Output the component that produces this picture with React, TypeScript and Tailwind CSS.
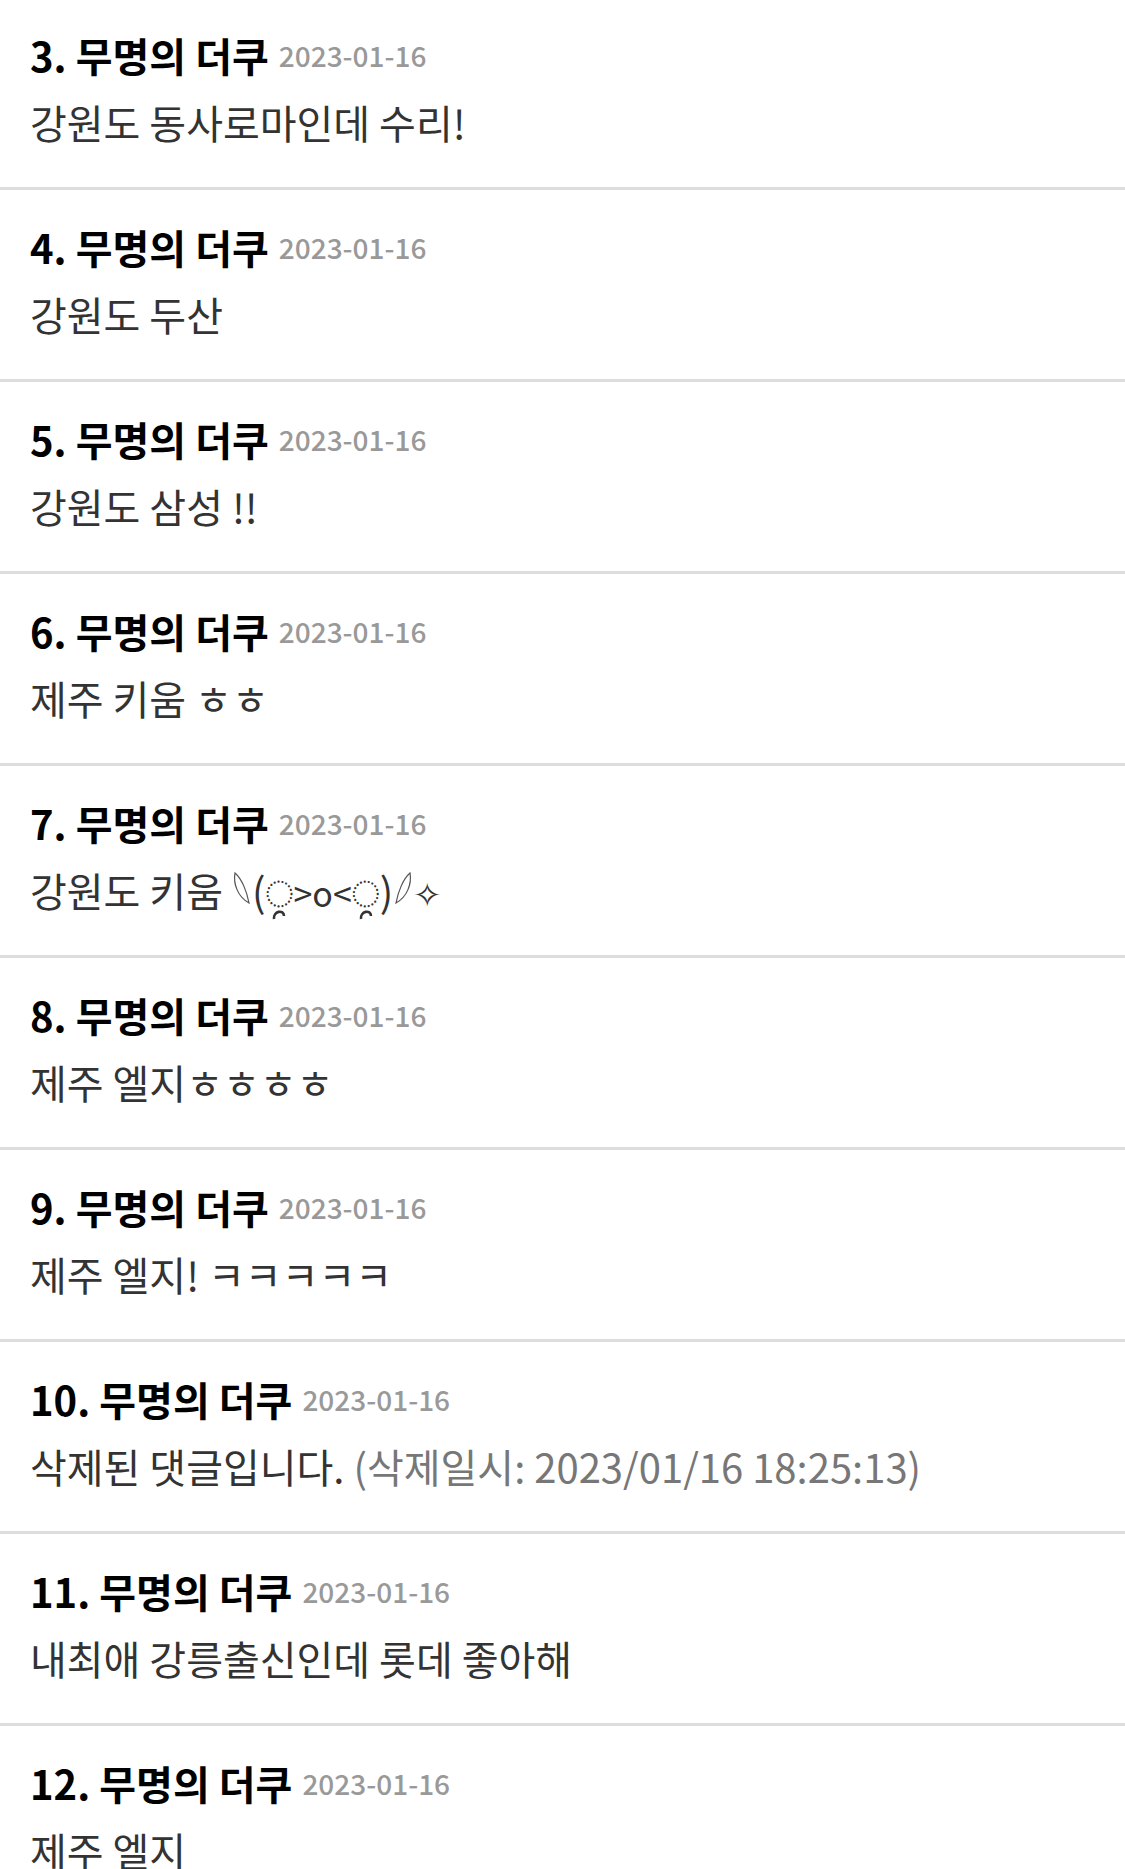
import type { ReactNode } from "react";

type Comment = {
  no: number;
  date: string;
  body: ReactNode;
};

const Leaf = ({ flip }: { flip?: boolean }) => (
  <svg
    width="20"
    height="34"
    viewBox="0 0 20 34"
    className={`inline-block align-[2px] ${flip ? "-scale-x-100" : ""}`}
    fill="none"
    stroke="#555"
    strokeWidth="1.2"
  >
    <path d="M3 2 C1 13 6 26 17 32 C15 21 10 8 3 2 Z" />
  </svg>
);

const Eye = () => (
  <span className="relative inline-block text-[28px] align-[2px]">
    ◌
    <svg
      width="14"
      height="12"
      viewBox="0 0 14 12"
      className="absolute left-1/2 -translate-x-1/2 top-[82%]"
      fill="none"
      stroke="#333"
      strokeWidth="2.6"
    >
      <path d="M2 11 C1 3 12 1 12 8" />
    </svg>
  </span>
);

const comments: Comment[] = [
  { no: 3, date: "2023-01-16", body: "강원도 동사로마인데 수리!" },
  { no: 4, date: "2023-01-16", body: "강원도 두산" },
  { no: 5, date: "2023-01-16", body: "강원도 삼성 !!" },
  { no: 6, date: "2023-01-16", body: "제주 키움 ㅎㅎ" },
  {
    no: 7,
    date: "2023-01-16",
    body: (
      <>
        강원도 키움 <Leaf />(<Eye />
        <span className="text-[34px]">&gt;o&lt;</span>
        <Eye />)<Leaf flip />
        <span className="text-[34px]">✧</span>
      </>
    ),
  },
  { no: 8, date: "2023-01-16", body: "제주 엘지ㅎㅎㅎㅎ" },
  { no: 9, date: "2023-01-16", body: "제주 엘지! ㅋㅋㅋㅋㅋ" },
  {
    no: 10,
    date: "2023-01-16",
    body: (
      <>
        삭제된 댓글입니다.{" "}
        <span className="text-[#777]">(삭제일시: 2023/01/16 18:25:13)</span>
      </>
    ),
  },
  { no: 11, date: "2023-01-16", body: "내최애 강릉출신인데 롯데 좋아해" },
  { no: 12, date: "2023-01-16", body: "제주 엘지" },
];

const CommentRow = ({ comment }: { comment: Comment }) => (
  <li className="h-[192px] border-b-[3px] border-[#dddddd] pl-[30px] pt-[33px]">
    <div className="flex items-center leading-[48px]">
      <span className="text-[40px] font-bold text-black">
        {comment.no}. 무명의 더쿠
      </span>
      <span className="ml-[10px] text-[28px] font-medium text-[#999]">
        {comment.date}
      </span>
    </div>
    <p className="mt-[19px] text-[40px] leading-[48px] text-[#333] whitespace-nowrap">
      {comment.body}
    </p>
  </li>
);

export default function App() {
  return (
    <div
      className="w-[1125px] h-[1869px] overflow-hidden bg-white"
      style={{ fontFamily: '"Noto Sans CJK KR", "Noto Sans", sans-serif' }}
    >
      <ul className="-mt-[2px]">
        {comments.map((c) => (
          <CommentRow key={c.no} comment={c} />
        ))}
      </ul>
    </div>
  );
}
